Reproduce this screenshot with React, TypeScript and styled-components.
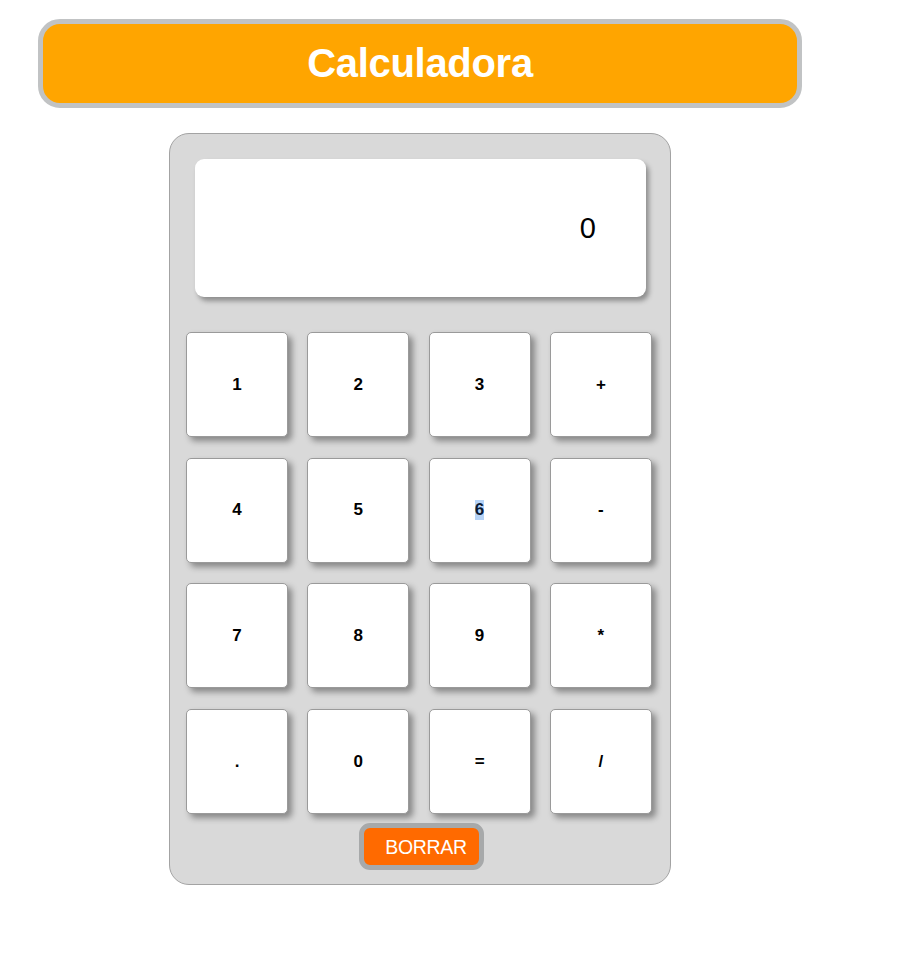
import React from "react";
import styled, { createGlobalStyle } from "styled-components";

const GlobalStyle = createGlobalStyle`
  * { box-sizing: border-box; }
  body {
    margin: 8px;
    background: #ffffff;
    font-family: "Liberation Sans", Arial, Helvetica, sans-serif;
  }
`;

const Page = styled.div`
  display: flex;
  flex-direction: column;
  align-items: flex-start;
`;

const Header = styled.header`
  margin: 11px 0 0 30px;
  width: 764px;
  height: 89px;
  border: 5px solid #c1c3c4;
  border-radius: 22px;
  background: #ffa500;
  display: flex;
  align-items: center;
  justify-content: center;
`;

const Title = styled.h1`
  margin: 0;
  color: #ffffff;
  font-size: 40px;
  font-weight: bold;
  letter-spacing: -0.3px;
`;

const Body = styled.div`
  margin: 25px 0 0 161px;
  width: 502px;
  height: 752px;
  background: #d9d9d9;
  border: 1px solid #a3a3a3;
  border-radius: 20px;
  padding: 25px 18px 0 16px;
  display: flex;
  flex-direction: column;
  align-items: stretch;
`;

const Display = styled.div`
  margin: 0 6px 0 9px;
  height: 138px;
  background: #ffffff;
  border-radius: 9px;
  box-shadow: 3px 4px 5px rgba(0, 0, 0, 0.35);
  display: flex;
  align-items: center;
  justify-content: flex-end;
  padding: 0 50px 0 0;
  font-size: 29px;
  color: #000;
`;

const Keys = styled.div`
  margin-top: 35px;
  display: grid;
  grid-template-columns: repeat(4, 102px);
  grid-auto-rows: 105px;
  column-gap: 19.3px;
  row-gap: 20.7px;
`;

const Key = styled.button`
  background: #ffffff;
  border: 1px solid #9a9a9a;
  border-radius: 5px;
  box-shadow: 4px 4px 6px rgba(0, 0, 0, 0.38);
  font-family: "Liberation Sans", Arial, Helvetica, sans-serif;
  font-weight: bold;
  font-size: 17px;
  color: #000;
  padding: 0;
  display: flex;
  align-items: center;
  justify-content: center;
  cursor: pointer;
`;

const Selected = styled.span`
  background: #b5d3f7;
  color: #0b1a33;
`;

const ClearRow = styled.div`
  display: flex;
  justify-content: center;
  margin-top: 9px;
`;

const ClearButton = styled.button`
  width: 125px;
  height: 47px;
  border: 5px solid #a7a9aa;
  border-radius: 11px;
  background: #ff6a00;
  color: #ffffff;
  font-family: "Liberation Sans", Arial, Helvetica, sans-serif;
  font-size: 19.5px;
  padding: 1px 0 0 10px;
  margin-left: 4px;
  display: flex;
  align-items: center;
  justify-content: center;
  letter-spacing: -0.3px;
`;

const keys = ["1", "2", "3", "+", "4", "5", "6", "-", "7", "8", "9", "*", ".", "0", "=", "/"];

export default function App() {
  return (
    <>
      <GlobalStyle />
      <Page>
        <Header>
          <Title>Calculadora</Title>
        </Header>
        <Body>
          <Display>0</Display>
          <Keys>
            {keys.map((k) => (
              <Key key={k}>{k === "6" ? <Selected>6</Selected> : k}</Key>
            ))}
          </Keys>
          <ClearRow>
            <ClearButton>BORRAR</ClearButton>
          </ClearRow>
        </Body>
      </Page>
    </>
  );
}
